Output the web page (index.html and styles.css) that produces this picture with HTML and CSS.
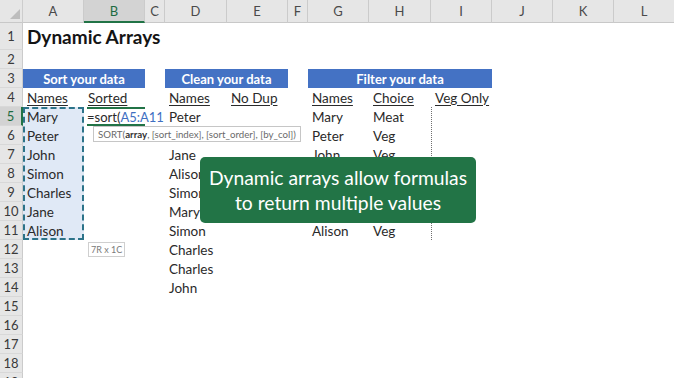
FILE: index.html
```html
<!DOCTYPE html>
<html>
<head>
<meta charset="utf-8">
<title>Dynamic Arrays</title>
<link rel="stylesheet" href="styles.css">
</head>
<body>
<div class="sheet">
  <div class="corner"></div>
  <div class="colh ga">A</div>
  <div class="colh gb on">B</div>
  <div class="colh gc">C</div>
  <div class="colh gd">D</div>
  <div class="colh ge">E</div>
  <div class="colh gf">F</div>
  <div class="colh gg">G</div>
  <div class="colh gh">H</div>
  <div class="colh gi">I</div>
  <div class="colh gj">J</div>
  <div class="colh gk">K</div>
  <div class="colh gl">L</div>

  <div class="rowh r1">1</div>
  <div class="rowh r2">2</div>
  <div class="rowh r3">3</div>
  <div class="rowh r4">4</div>
  <div class="rowh r5 on">5</div>
  <div class="rowh r6">6</div>
  <div class="rowh r7">7</div>
  <div class="rowh r8">8</div>
  <div class="rowh r9">9</div>
  <div class="rowh r10">10</div>
  <div class="rowh r11">11</div>
  <div class="rowh r12">12</div>
  <div class="rowh r13">13</div>
  <div class="rowh r14">14</div>
  <div class="rowh r15">15</div>
  <div class="rowh r16">16</div>
  <div class="rowh r17">17</div>
  <div class="rowh r18">18</div>
  <div class="rowh r19">19</div>

  <div class="sel"></div>
  <div class="active"></div>

  <div class="cell title ga r1">Dynamic Arrays</div>

  <div class="cell band span-ab r3">Sort your data</div>
  <div class="cell band span-de r3">Clean your data</div>
  <div class="cell band span-gi r3">Filter your data</div>

  <div class="cell hd ga r4"><span>Names</span></div>
  <div class="cell hd gb r4"><span>Sorted</span></div>
  <div class="cell hd gd r4"><span>Names</span></div>
  <div class="cell hd ge r4"><span>No Dup</span></div>
  <div class="cell hd gg r4"><span>Names</span></div>
  <div class="cell hd gh r4"><span>Choice</span></div>
  <div class="cell hd gi r4"><span>Veg Only</span></div>

  <div class="cell ga r5">Mary</div>
  <div class="cell ga r6">Peter</div>
  <div class="cell ga r7">John</div>
  <div class="cell ga r8">Simon</div>
  <div class="cell ga r9">Charles</div>
  <div class="cell ga r10">Jane</div>
  <div class="cell ga r11">Alison</div>

  <div class="cell gb r5 formula">=sort(<span class="ref">A5:A11</span></div>

  <div class="cell gd r5">Peter</div>
  <div class="cell gd r7">Jane</div>
  <div class="cell gd r8">Alison</div>
  <div class="cell gd r9">Simon</div>
  <div class="cell gd r10">Mary</div>
  <div class="cell gd r11">Simon</div>
  <div class="cell gd r12">Charles</div>
  <div class="cell gd r13">Charles</div>
  <div class="cell gd r14">John</div>

  <div class="cell gg r5">Mary</div>
  <div class="cell gg r6">Peter</div>
  <div class="cell gg r7">John</div>
  <div class="cell gg r11">Alison</div>

  <div class="cell gh r5">Meat</div>
  <div class="cell gh r6">Veg</div>
  <div class="cell gh r7">Veg</div>
  <div class="cell gh r11">Veg</div>

  <div class="ants"></div>

  <div class="tip">SORT(<b>array</b>, [sort_index], [sort_order], [by_col])</div>
  <div class="size">7R x 1C</div>

  <div class="banner">
    <span>Dynamic arrays allow formulas</span>
    <span>to return multiple values</span>
  </div>
</div>
</body>
</html>
```

FILE: styles.css
```css
* { box-sizing: border-box; }
html, body { margin: 0; padding: 0; background: #ffffff; }
body {
  width: 674px;
  height: 378px;
  overflow: hidden;
  font-family: Lato, "Liberation Sans", sans-serif;
}

.sheet {
  position: relative;
  display: grid;
  grid-template-columns: 23px 61px 61px 20px 62px 61px 20px 61px 62px 61px 61px 61px 61px;
  grid-template-rows: 23px 27px repeat(18, 19px);
  color: #2a2a2a;
  font-size: 13.5px;
}

/* headers */
.corner {
  grid-column: 1;
  grid-row: 1;
  background: #e6e6e6;
  border-right: 1px solid #cdcdcd;
  border-bottom: 1px solid #c8c8c8;
  position: relative;
}
.corner::after {
  content: "";
  position: absolute;
  right: 2px;
  bottom: 3px;
  width: 10px;
  height: 10px;
  background: #bdbdbd;
  clip-path: polygon(100% 0, 100% 100%, 0 100%);
}
.colh {
  grid-row: 1;
  background: #e6e6e6;
  border-right: 1px solid #cbcbcb;
  border-bottom: 1px solid #c8c8c8;
  display: flex;
  align-items: center;
  justify-content: center;
  font-size: 13px;
  color: #4a4a4a;
}
.colh.on {
  background: #d3d3d3;
  border-bottom: 2px solid #217346;
  color: #1e6b41;
}
.rowh {
  grid-column: 1;
  background: #e6e6e6;
  border-right: 1px solid #cbcbcb;
  border-bottom: 1px solid #d8d8d8;
  display: flex;
  align-items: center;
  justify-content: center;
  font-size: 13px;
  color: #3a3a3a;
}
.rowh.on {
  background: #d3d3d3;
  border-right: 2px solid #217346;
  color: #1e6b41;
}

/* column placement */
.ga { grid-column: 2; }
.gb { grid-column: 3; }
.gc { grid-column: 4; }
.gd { grid-column: 5; }
.ge { grid-column: 6; }
.gf { grid-column: 7; }
.gg { grid-column: 8; }
.gh { grid-column: 9; }
.gi { grid-column: 10; }
.gj { grid-column: 11; }
.gk { grid-column: 12; }
.gl { grid-column: 13; }
.span-ab { grid-column: 2 / 4; }
.span-de { grid-column: 5 / 7; }
.span-gi { grid-column: 8 / 11; }

/* row placement */
.r1 { grid-row: 2; }
.r2 { grid-row: 3; }
.r3 { grid-row: 4; }
.r4 { grid-row: 5; }
.r5 { grid-row: 6; }
.r6 { grid-row: 7; }
.r7 { grid-row: 8; }
.r8 { grid-row: 9; }
.r9 { grid-row: 10; }
.r10 { grid-row: 11; }
.r11 { grid-row: 12; }
.r12 { grid-row: 13; }
.r13 { grid-row: 14; }
.r14 { grid-row: 15; }
.r15 { grid-row: 16; }
.r16 { grid-row: 17; }
.r17 { grid-row: 18; }
.r18 { grid-row: 19; }
.r19 { grid-row: 20; }

/* cells */
.cell {
  display: flex;
  align-items: center;
  padding-left: 4px;
  white-space: nowrap;
  min-width: 0;
}
.title {
  font-size: 19px;
  font-weight: 700;
  color: #141414;
}
.band {
  background: #4472c4;
  color: #ffffff;
  font-weight: 700;
  font-size: 13px;
  justify-content: center;
  padding: 0;
}
.hd span {
  text-decoration: underline;
  text-decoration-thickness: 1px;
  text-underline-offset: 2px;
}
.formula { padding-left: 3px; font-size: 13px; }
.ref { color: #3e6fc2; }

/* selection overlays */
.sel {
  grid-column: 2;
  grid-row: 6 / 13;
  background: #e0e9f6;
  border: 2px dashed #2c7389;
}
.active {
  grid-column: 3;
  grid-row: 6;
  margin-left: 3px;
  border-top: 2px solid #217346;
  border-bottom: 2px solid #217346;
}
.ants {
  grid-column: 10;
  grid-row: 6 / 13;
  width: 0;
  border-left: 1px dotted #6f6f6f;
}
.tip {
  grid-column: 3 / 9;
  grid-row: 7;
  justify-self: start;
  align-self: start;
  margin-left: 9px;
  height: 16px;
  padding: 0 4px;
  border: 1px solid #c6c6c6;
  background: #ffffff;
  font-size: 9.7px;
  color: #6a6a6a;
  display: flex;
  align-items: center;
  white-space: nowrap;
}
.tip b { color: #333333; }
.size {
  grid-column: 3 / 5;
  grid-row: 13;
  justify-self: start;
  align-self: center;
  margin-left: 4px;
  height: 15px;
  padding: 0 2px;
  border: 1px solid #cfcfcf;
  background: #ffffff;
  font-size: 9px;
  color: #7a7a7a;
  display: flex;
  align-items: center;
  white-space: nowrap;
}

/* banner */
.banner {
  position: absolute;
  left: 200px;
  top: 157px;
  width: 276px;
  height: 66px;
  background: #227446;
  border-radius: 5px;
  color: #ffffff;
  font-size: 19.3px;
  line-height: 25px;
  display: flex;
  flex-direction: column;
  align-items: center;
  justify-content: center;
}
```
